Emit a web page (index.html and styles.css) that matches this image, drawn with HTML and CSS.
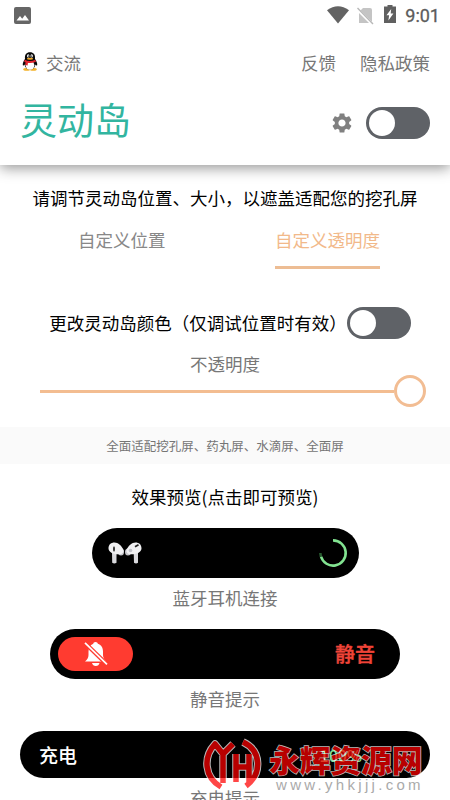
FILE: index.html
```html
<!DOCTYPE html>
<html lang="zh-CN">
<head>
<meta charset="utf-8">
<title>灵动岛</title>
<link rel="stylesheet" href="styles.css">
</head>
<body>
<div class="screen">
  <header class="header">
    <div class="status">
      <svg class="status-image" width="17" height="17" viewBox="0 0 17 17"><rect width="17" height="17" rx="2" fill="#666"/><path d="M2.500 13.500 6 9l2.200 2.700L11 8l4 5.500z" fill="#fff"/></svg>
      <div class="status-right">
        <svg class="wifi" width="22" height="18" viewBox="0 0 22 18"><path d="M0 4.200Q11-3.500 22 4.200L11 17.500z" fill="#636363"/></svg>
        <svg class="sim" width="17" height="18" viewBox="0 0 17 18"><path d="M6 1h7q2 0 2 2v13H2V5z" fill="#c4c4c4"/><path d="m0 1.800 15.600 15.700" stroke="#fff" stroke-width="3"/><path d="m.5 1 15.500 16" stroke="#b8b8b8" stroke-width="1.400"/></svg>
        <svg class="battery" width="12" height="18" viewBox="0 0 12 18"><path d="M3.500 0h5v1.500H12V18H0V1.500h3.500z" fill="#606060"/><path d="M7.200 4 2.500 10.200h2.600L4.400 15.500l5-6.900H6.700z" fill="#fff"/></svg>
        <span class="clock">9:01</span>
      </div>
    </div>
    <nav class="nav">
      <svg class="penguin" width="16" height="19" viewBox="0 0 16 19"><ellipse cx="4.700" cy="17.400" rx="3.500" ry="1.300" fill="#f3b32b"/><ellipse cx="11.300" cy="17.400" rx="3.500" ry="1.300" fill="#f3b32b"/><path d="M3 7C2.500 2.500 4.500.3 8 .3s5.500 2.200 5 6.700c1.500 2 2.500 4.500 2.200 6-.3 1-1.200.4-1.700-.6C13 15.500 11 17.500 8 17.500s-5-2-5.500-5.100c-.5 1-1.400 1.600-1.700.6C.5 11.500 1.500 9 3 7z" fill="#090909"/><ellipse cx="8" cy="13.300" rx="4.400" ry="4.400" fill="#fff"/><path d="M2.600 7.700Q8 10.300 13.400 7.700l.5 2Q8 12.500 2.200 9.700zM3.500 9.700l2.500.9-.4 3-2.300-.5z" fill="#e12630"/><ellipse cx="6.200" cy="3.900" rx="1.200" ry="1.600" fill="#fff"/><ellipse cx="9.700" cy="3.900" rx="1.200" ry="1.600" fill="#fff"/><circle cx="6.500" cy="4.100" r=".6"/><circle cx="9.500" cy="4.100" r=".6"/><ellipse cx="8" cy="6.700" rx="3.200" ry="1" fill="#f3a926"/></svg>
      <span class="chat">交流</span>
      <span class="feedback">反馈</span>
      <span>隐私政策</span>
    </nav>
    <div class="title-row">
      <h1>灵动岛</h1>
      <svg class="gear" width="24" height="24" viewBox="0 0 24 24"><path fill="#808080" d="M19.140 12.940c.04-.3.060-.61.060-.94 0-.32-.020-.64-.070-.94l2.030-1.580c.18-.14.230-.41.120-.61l-1.920-3.320c-.12-.22-.37-.29-.59-.22l-2.390.96c-.5-.38-1.030-.7-1.620-.94L14.400 2.810c-.04-.24-.24-.41-.48-.41h-3.840c-.24 0-.43.17-.47.41L9.250 5.350C8.660 5.590 8.120 5.920 7.630 6.290L5.240 5.330c-.22-.08-.47 0-.59.22L2.740 8.870c-.12.210-.08.470.12.610l2.030 1.580C4.840 11.360 4.800 11.690 4.800 12s.020.640.070.940l-2.030 1.580c-.18.140-.23.410-.12.610l1.920 3.320c.12.220.370.290.590.220l2.390-.96c.5.380 1.030.7 1.620.940l.36 2.540c.05.240.240.410.480.410h3.840c.24 0 .44-.17.470-.41l.36-2.540c.59-.24 1.130-.56 1.620-.94l2.390.96c.22.080.470 0 .59-.22l1.920-3.320c.12-.22.070-.47-.12-.61zM12 15.600c-1.980 0-3.600-1.620-3.600-3.600s1.620-3.600 3.600-3.600 3.600 1.620 3.600 3.600-1.620 3.600-3.600 3.600z"/></svg>
      <span class="switch"></span>
    </div>
  </header>
  <main>
    <p class="hint">请调节灵动岛位置、大小，以遮盖适配您的挖孔屏</p>
    <div class="tabs"><span class="tab">自定义位置</span><span class="tab active">自定义透明度</span></div>
    <div class="color-row"><span>更改灵动岛颜色（仅调试位置时有效）</span><span class="switch"></span></div>
    <p class="caption opacity-label">不透明度</p>
    <div class="slider"><span class="track"></span><span class="thumb"></span></div>
    <p class="notice">全面适配挖孔屏、药丸屏、水滴屏、全面屏</p>
    <h2>效果预览(点击即可预览)</h2>
    <div class="island earbuds">
      <svg width="34" height="23" viewBox="0 0 34 23"><path d="M4 10h4.500v10.800q-2.200 1.600-4.300 0zM25.700 10H30v10.800q-2 1.600-4 0z" fill="#d9d9dd"/><ellipse cx="13" cy="10" rx="3" ry="3.500" fill="#c5c5ca"/><ellipse cx="20" cy="10" rx="3" ry="3.500" fill="#c5c5ca"/><path d="M.5 6.500C.5 2.500 3 .5 6.500.5S14 4 15.500 8c.5 2-1 4-3 4.200C8 13 .5 11 .5 6.500z" fill="#f0f0f2"/><path d="M33.500 6.500c0-4-2.500-6-6-6S20 4 18.500 8c-.5 2 1 4 3 4.200 4.500.8 12-1.200 12-5.700z" fill="#f0f0f2"/><ellipse cx="6" cy="7" rx="1" ry="2.800" fill="#333"/><path d="m27 4.800 3.500-2" stroke="#222" stroke-width="1.800"/><circle cx="22.500" cy="8.500" r="1.800" fill="#bfc0c7"/></svg>
      <svg width="30" height="30" viewBox="0 0 30 30"><path d="M15 2.400A12.600 12.600 0 1 1 3 18.500" fill="none" stroke="#82e391" stroke-width="2.600"/><path d="M3 18.500Q2.500 17 2.400 15" fill="none" stroke="#285b30" stroke-width="2.600"/></svg>
    </div>
    <p class="caption">蓝牙耳机连接</p>
    <div class="island mute">
      <span class="mute-badge"><svg width="24" height="26" viewBox="0 0 24 26"><path d="M11.500 1c1.300 0 2.200.7 2.300 1.800C17.500 4 19 7 19 10.500V14q0 3.500 3.500 6.500H1q3.500-3 3.500-6.500v-3.500C4.500 7 6 4 9.300 2.800 9.400 1.700 10.200 1 11.500 1zM8 22h7.500q-.7 3-3.700 3T8 22z" fill="#fff"/><path d="m.5 1.500 22.500 22" stroke="#ff3b30" stroke-width="4.200"/><path d="m1 1.800 22 21.500" stroke="#fff" stroke-width="1.700"/></svg></span>
      <span class="mute-text">静音</span>
    </div>
    <p class="caption">静音提示</p>
    <div class="island charge"><span>充电</span><span class="charge-level">100%</span></div>
    <p class="caption">充电提示</p>
  </main>
  <div class="watermark">
    <svg class="mark" width="60" height="54" viewBox="0 0 60 54"><g fill="none" stroke-linejoin="round"><g stroke="#fff" stroke-width="7.500"><path d="M19 50C2 40 1 20 13 7l8 10L31 7M21 17v29M34 17v28M34 30h13M47 17v28M41 5c19 9 19 32 3 44"/></g><g stroke="#f00" stroke-width="5.500"><path d="M19 50C2 40 1 20 13 7l8 10L31 7M21 17v29M34 17v28M34 30h13M47 17v28M41 5c19 9 19 32 3 44"/></g></g></svg>
    <div class="mark-copy"><div class="mark-name">永辉资源网</div><div class="mark-url">www.yhkjjj.com</div></div>
  </div>
</div>
</body>
</html>
```
FILE: styles.css
```css
* { box-sizing: border-box; margin: 0; padding: 0; }
body {
  width: 450px;
  height: 800px;
  overflow: hidden;
  background: #fff;
  color: #000;
  font: 400 17.5px/26px Roboto, "Noto Sans CJK SC", sans-serif;
}
.screen { position: relative; width: 450px; height: 800px; overflow: hidden; }
.header { height: 165px; background: #fff; box-shadow: 0 3px 13px rgba(0, 0, 0, .42); }
.status { display: flex; justify-content: space-between; height: 30px; padding: 7px 10px 0 14px; }
.status-right { display: flex; align-items: flex-start; }
.wifi { margin-top: -1px; }
.sim { margin-left: 8px; }
.battery { margin: -2px 0 0 10px; }
.clock { margin-left: 9px; color: #5c5c5c; font: 400 18px/18px Roboto, sans-serif; -webkit-text-stroke: .3px #5c5c5c; }
.nav { display: flex; align-items: center; height: 65px; padding: 1px 20px 0 22px; color: #777; font-family: "Noto Sans CJK SC", sans-serif; }
.penguin { margin-top: -3px; }
.chat { margin: 0 auto 0 8px; }
.feedback { margin-right: 24px; }
.title-row { display: flex; align-items: center; height: 56px; padding: 0 20px; }
h1 { margin: -8px auto 0 0; color: #32b5a0; font: 400 37px/50px "Noto Sans CJK SC", sans-serif; }
.gear { margin-right: 12px; }
.switch { width: 64px; height: 32px; padding: 3px; border-radius: 16px; background: #5f6267; }
.switch::before { content: ""; display: block; width: 26px; height: 26px; border-radius: 50%; background: #fff; }
main { display: flex; flex-direction: column; align-items: center; padding-top: 20px; font-family: "Noto Sans CJK SC", sans-serif; }
.hint { white-space: nowrap; }
.tabs { display: flex; width: 100%; height: 58px; margin-top: 16px; padding: 0 70px 0 78px; justify-content: space-between; }
.tab { height: 42px; color: #888; }
.active { color: #f2b98a; border-bottom: 3px solid #edbd94; }
.color-row { display: flex; align-items: center; justify-content: center; height: 32px; margin: 22px 0 0 10px; white-space: nowrap; }
.caption { color: #777; }
.opacity-label { margin-top: 12px; }
.slider { display: flex; align-items: center; width: 386px; height: 32px; margin: -2px 0 0 16px; }
.track { flex: 1; height: 3px; background: #f3bd91; }
.thumb { width: 32px; height: 32px; border: 3px solid #f2bd93; border-radius: 50%; background: #fff; }
.notice { width: 450px; height: 37px; margin-top: 20px; background: #fafafa; color: #757575; text-align: center; font-size: 12.500px; line-height: 37px; }
h2 { margin: 20px 0 18px; font-size: 17.500px; font-weight: 400; line-height: 26px; }
.island { display: flex; align-items: center; justify-content: space-between; height: 50px; border-radius: 25px; background: #000; color: #fff; }
.earbuds { width: 267px; margin-bottom: 7px; padding: 0 11px 0 16px; }
.mute { width: 350px; margin: 18px 0 7px; padding: 0 25px 0 8px; }
.mute-badge { display: flex; align-items: center; justify-content: center; width: 75px; height: 34px; border-radius: 17px; background: #ff3b30; }
.mute-text { color: #f04438; font-size: 20px; font-weight: 500; -webkit-text-stroke: .4px #f04438; }
.charge { width: 410px; height: 47px; margin: 19px 0 7px; padding: 0 68px 0 19px; font-size: 19px; font-weight: 500; }
.charge-level { color: #80df90; font-size: 16px; }
.watermark { position: absolute; left: 202px; top: 737px; display: flex; opacity: .72; }
.mark-copy { margin-left: 7px; }
.mark-name { color: #f00; font: 900 30.700px/38px "Noto Sans CJK SC", sans-serif; margin-top: 3px; -webkit-text-stroke: 1.500px #fff; paint-order: stroke fill; white-space: nowrap; }
.mark-url { margin: -1px 0 0 7px; color: #8a8a8a; font: 15px/16px "Liberation Sans", sans-serif; letter-spacing: 3.300px; white-space: nowrap; }
```
